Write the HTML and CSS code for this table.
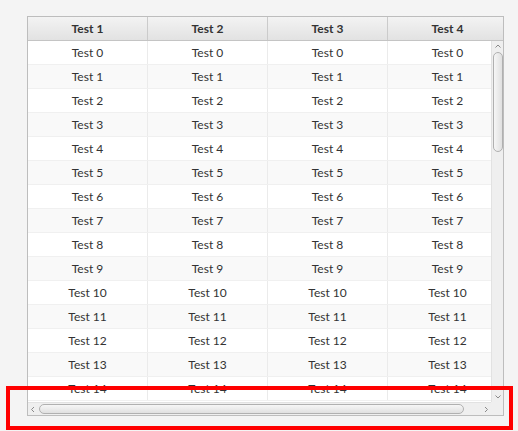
FILE: index.html
```html
<!DOCTYPE html>
<html>
<head>
<meta charset="utf-8">
<link rel="stylesheet" href="styles.css">
</head>
<body>
<div class="table">
  <div class="header">
    <div class="hcell">Test 1</div>
    <div class="hcell">Test 2</div>
    <div class="hcell">Test 3</div>
    <div class="hcell">Test 4</div>
  </div>
  <div class="body">
    <div class="viewport">
      <div class="row"><div class="cell">Test 0</div><div class="cell">Test 0</div><div class="cell">Test 0</div><div class="cell">Test 0</div></div>
      <div class="row odd"><div class="cell">Test 1</div><div class="cell">Test 1</div><div class="cell">Test 1</div><div class="cell">Test 1</div></div>
      <div class="row"><div class="cell">Test 2</div><div class="cell">Test 2</div><div class="cell">Test 2</div><div class="cell">Test 2</div></div>
      <div class="row odd"><div class="cell">Test 3</div><div class="cell">Test 3</div><div class="cell">Test 3</div><div class="cell">Test 3</div></div>
      <div class="row"><div class="cell">Test 4</div><div class="cell">Test 4</div><div class="cell">Test 4</div><div class="cell">Test 4</div></div>
      <div class="row odd"><div class="cell">Test 5</div><div class="cell">Test 5</div><div class="cell">Test 5</div><div class="cell">Test 5</div></div>
      <div class="row"><div class="cell">Test 6</div><div class="cell">Test 6</div><div class="cell">Test 6</div><div class="cell">Test 6</div></div>
      <div class="row odd"><div class="cell">Test 7</div><div class="cell">Test 7</div><div class="cell">Test 7</div><div class="cell">Test 7</div></div>
      <div class="row"><div class="cell">Test 8</div><div class="cell">Test 8</div><div class="cell">Test 8</div><div class="cell">Test 8</div></div>
      <div class="row odd"><div class="cell">Test 9</div><div class="cell">Test 9</div><div class="cell">Test 9</div><div class="cell">Test 9</div></div>
      <div class="row"><div class="cell">Test 10</div><div class="cell">Test 10</div><div class="cell">Test 10</div><div class="cell">Test 10</div></div>
      <div class="row odd"><div class="cell">Test 11</div><div class="cell">Test 11</div><div class="cell">Test 11</div><div class="cell">Test 11</div></div>
      <div class="row"><div class="cell">Test 12</div><div class="cell">Test 12</div><div class="cell">Test 12</div><div class="cell">Test 12</div></div>
      <div class="row odd"><div class="cell">Test 13</div><div class="cell">Test 13</div><div class="cell">Test 13</div><div class="cell">Test 13</div></div>
      <div class="row"><div class="cell">Test 14</div><div class="cell">Test 14</div><div class="cell">Test 14</div><div class="cell">Test 14</div></div>
    </div>
    <div class="vscroll">
      <svg class="arrow" width="12" height="10" viewBox="0 0 12 10"><path d="M3.5 6.5 L6 4 L8.5 6.5" fill="none" stroke="#8a8a8a" stroke-width="1"/></svg>
      <div class="vtrack"><div class="vthumb"></div></div>
      <svg class="arrow" width="12" height="10" viewBox="0 0 12 10"><path d="M3.5 3.5 L6 6 L8.5 3.5" fill="none" stroke="#8a8a8a" stroke-width="1"/></svg>
    </div>
    <div class="hscroll">
      <svg class="harrow" width="10" height="13" viewBox="0 0 10 13"><path d="M6 4 L3.5 6.5 L6 9" fill="none" stroke="#8a8a8a" stroke-width="1"/></svg>
      <div class="htrack"><div class="hthumb"></div></div>
      <svg class="harrow" width="10" height="13" viewBox="0 0 10 13"><path d="M4 4 L6.5 6.5 L4 9" fill="none" stroke="#8a8a8a" stroke-width="1"/></svg>
    </div>
    <div class="corner"></div>
  </div>
</div>
<div class="highlight"></div>
</body>
</html>
```
FILE: styles.css
```css
html, body {
  margin: 0;
  padding: 0;
}
body {
  background: #f4f4f4;
  width: 518px;
  height: 431px;
  overflow: hidden;
  font-family: Lato, "Noto Sans", sans-serif;
  font-size: 12px;
  color: #333;
  padding: 16px 0 0 27px;
  box-sizing: border-box;
  position: relative;
}
.table {
  width: 477px;
  height: 400px;
  box-sizing: border-box;
  border: 1px solid #bdbdbd;
  background: #fff;
  display: flex;
  flex-direction: column;
}
.header {
  height: 24px;
  box-sizing: border-box;
  border-bottom: 1px solid #c4c4c4;
  display: flex;
  overflow: hidden;
  background: linear-gradient(#f3f3f3, #e2e2e2);
  flex: none;
}
.hcell {
  flex: none;
  width: 120px;
  box-sizing: border-box;
  border-right: 1px solid #cbcbcb;
  text-align: center;
  font-weight: bold;
  line-height: 23px;
  color: #333;
}
.body {
  display: grid;
  grid-template-columns: 463px 12px;
  grid-template-rows: 361px 13px;
}
.viewport {
  overflow: hidden;
}
.row {
  display: flex;
  height: 24px;
  box-sizing: border-box;
  border-bottom: 1px solid #f0f0f0;
  background: #fff;
}
.row.odd {
  background: #f9f9f9;
}
.cell {
  flex: none;
  width: 120px;
  box-sizing: border-box;
  border-right: 1px solid #ebebeb;
  text-align: center;
  line-height: 23px;
}
.vscroll {
  background: #efefef;
  border-left: 1px solid #e2e2e2;
  box-sizing: border-box;
  display: flex;
  flex-direction: column;
  align-items: center;
}
.vscroll .arrow {
  flex: none;
  display: block;
}
.vtrack {
  flex: 1;
  width: 100%;
  padding-top: 1px;
  box-sizing: border-box;
  display: flex;
  justify-content: center;
}
.vthumb {
  width: 10px;
  height: 100px;
  box-sizing: border-box;
  border: 1px solid #b0b0b0;
  border-radius: 5px;
  background: linear-gradient(90deg, #f6f6f6, #e0e0e0);
}
.hscroll {
  background: #efefef;
  border-top: 1px solid #e2e2e2;
  box-sizing: border-box;
  display: flex;
  align-items: center;
}
.harrow {
  flex: none;
  display: block;
}
.htrack {
  flex: 1;
  display: flex;
  padding-left: 1px;
}
.hthumb {
  width: 425px;
  height: 10px;
  box-sizing: border-box;
  border: 1px solid #b0b0b0;
  border-radius: 5px;
  background: linear-gradient(#f6f6f6, #e0e0e0);
}
.corner {
  background: #efefef;
}
.highlight {
  position: absolute;
  left: 6px;
  top: 386px;
  width: 507px;
  height: 44px;
  box-sizing: border-box;
  border: 4px solid #ff0000;
}
```
